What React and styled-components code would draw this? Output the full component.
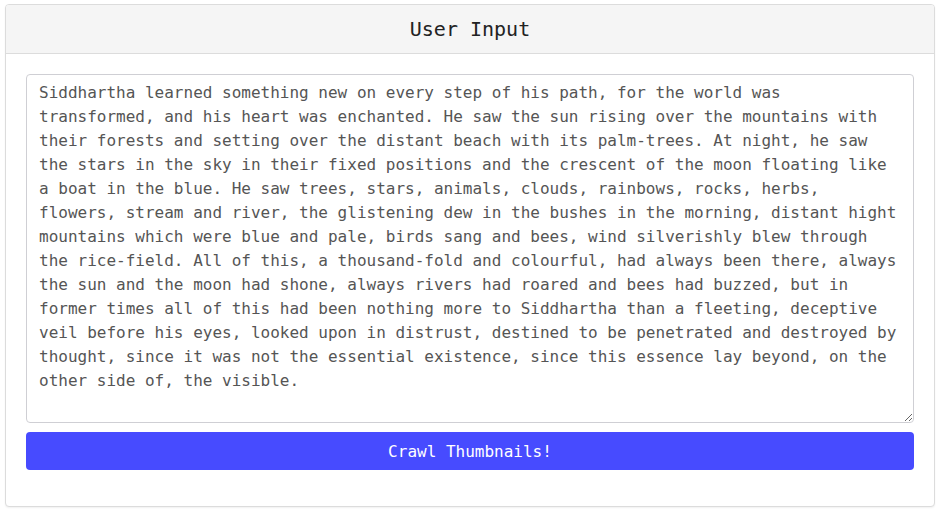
import React, { useState } from 'react';
import styled, { createGlobalStyle } from 'styled-components';

const GlobalStyle = createGlobalStyle`
    html, body {
        margin: 0;
        padding: 0;
        background: #ffffff;
        font-family: "DejaVu Sans Mono", monospace;
    }
`;

const Page = styled.div`
    padding: 4px 5px;
`;

const Card = styled.div`
    display: flex;
    flex-direction: column;
    width: 930px;
    height: 503px;
    box-sizing: border-box;
    border: 1px solid #dcdcdc;
    border-radius: 4px;
    box-shadow: 0 1px 2px rgba(0, 0, 0, 0.06);
    background: #fff;
    overflow: hidden;
`;

const CardHeader = styled.div`
    display: flex;
    align-items: center;
    justify-content: center;
    height: 48px;
    background: #f5f5f5;
    border-bottom: 1px solid #dcdcdc;
    h3 {
        margin: 0;
        font-size: 20px;
        font-weight: 400;
        color: #222;
    }
`;

const CardBody = styled.form`
    display: flex;
    flex-direction: column;
    gap: 9px;
    padding: 20px 20px;
`;

const TextArea = styled.textarea`
    display: block;
    box-sizing: border-box;
    width: 100%;
    height: 349px;
    margin: 0;
    padding: 6px 12px 4px;
    font-family: "DejaVu Sans Mono", monospace;
    font-size: 16px;
    line-height: 24px;
    color: #555;
    border: 1px solid #cfcfd4;
    border-radius: 4px;
    outline: none;
    resize: vertical;
`;

const Button = styled.button`
    height: 38px;
    border: none;
    border-radius: 4px;
    background: #474bff;
    color: #fff;
    font-family: "DejaVu Sans Mono", monospace;
    font-size: 16px;
    cursor: pointer;
`;

const initialText = "Siddhartha learned something new on every step of his path, for the world was transformed, and his heart was enchanted. He saw the sun rising over the mountains with their forests and setting over the distant beach with its palm-trees. At night, he saw the stars in the sky in their fixed positions and the crescent of the moon floating like a boat in the blue. He saw trees, stars, animals, clouds, rainbows, rocks, herbs, flowers, stream and river, the glistening dew in the bushes in the morning, distant hight mountains which were blue and pale, birds sang and bees, wind silverishly blew through the rice-field. All of this, a thousand-fold and colourful, had always been there, always the sun and the moon had shone, always rivers had roared and bees had buzzed, but in former times all of this had been nothing more to Siddhartha than a fleeting, deceptive veil before his eyes, looked upon in distrust, destined to be penetrated and destroyed by thought, since it was not the essential existence, since this essence lay beyond, on the other side of, the visible.";

const App = () => {
    const [text, setText] = useState(initialText);

    return (
        <>
            <GlobalStyle />
            <Page>
                <Card>
                    <CardHeader>
                        <h3>User Input</h3>
                    </CardHeader>
                    <CardBody onSubmit={(e) => e.preventDefault()}>
                        <TextArea value={text} spellCheck={true} onChange={(e) => setText(e.target.value)} />
                        <Button type='submit'>Crawl Thumbnails!</Button>
                    </CardBody>
                </Card>
            </Page>
        </>
    );
};

export default App;
